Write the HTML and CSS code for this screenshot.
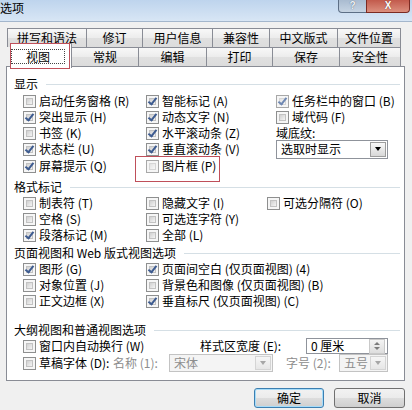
FILE: index.html
```html
<!DOCTYPE html>
<html lang="zh-CN">
<head>
  <meta charset="UTF-8">
  <title>选项</title>
  <link rel="stylesheet" href="styles.css">
</head>
<body>

<div class="titlebar">
  <span class="title">选项</span>
  <div class="caption-btns">
    <span class="cap-btn help"><span>?</span></span>
    <span class="cap-btn close"><span>X</span></span>
  </div>
</div>

<div class="tabs">
  <div class="tab-row back">
    <div class="tab">拼写和语法</div>
    <div class="tab">修订</div>
    <div class="tab">用户信息</div>
    <div class="tab">兼容性</div>
    <div class="tab">中文版式</div>
    <div class="tab">文件位置</div>
  </div>
  <div class="tab-row front">
    <div class="tab active"><span class="focus">视图</span></div>
    <div class="tab">常规</div>
    <div class="tab">编辑</div>
    <div class="tab">打印</div>
    <div class="tab">保存</div>
    <div class="tab">安全性</div>
  </div>
</div>

<div class="panel">
  <div class="sec-head">显示</div>
  <div class="opts show">
    <label class="cb-item"><span class="cb"></span>启动任务窗格 (R)</label>
    <label class="cb-item"><span class="cb on"></span>突出显示 (H)</label>
    <label class="cb-item"><span class="cb"></span>书签 (K)</label>
    <label class="cb-item"><span class="cb on"></span>状态栏 (U)</label>
    <label class="cb-item"><span class="cb on"></span>屏幕提示 (Q)</label>
    <label class="cb-item"><span class="cb on"></span>智能标记 (A)</label>
    <label class="cb-item"><span class="cb on"></span>动态文字 (N)</label>
    <label class="cb-item"><span class="cb on"></span>水平滚动条 (Z)</label>
    <label class="cb-item"><span class="cb on"></span>垂直滚动条 (V)</label>
    <label class="cb-item"><span class="cb dim"></span>图片框 (P)</label>
    <label class="cb-item"><span class="cb on dim"></span>任务栏中的窗口 (B)</label>
    <label class="cb-item"><span class="cb"></span>域代码 (F)</label>
    <span class="field-label">域底纹<u>:</u></span>
    <div class="combo"><span class="combo-text">选取时显示</span><span class="drop"><i class="arrow"></i></span></div>
  </div>

  <div class="sec-head fmt">格式标记</div>
  <div class="opts marks">
    <label class="cb-item"><span class="cb"></span>制表符 (T)</label>
    <label class="cb-item"><span class="cb"></span>空格 (S)</label>
    <label class="cb-item"><span class="cb on"></span>段落标记 (M)</label>
    <label class="cb-item"><span class="cb"></span>隐藏文字 (I)</label>
    <label class="cb-item"><span class="cb"></span>可选连字符 (Y)</label>
    <label class="cb-item"><span class="cb"></span>全部 (L)</label>
    <label class="cb-item"><span class="cb"></span>可选分隔符 (O)</label>
  </div>

  <div class="sec-head web">页面视图和 Web 版式视图选项</div>
  <div class="opts page">
    <label class="cb-item"><span class="cb on"></span>图形 (G)</label>
    <label class="cb-item"><span class="cb"></span>对象位置 (J)</label>
    <label class="cb-item"><span class="cb"></span>正文边框 (X)</label>
    <label class="cb-item"><span class="cb on"></span>页面间空白 (仅页面视图) (4)</label>
    <label class="cb-item"><span class="cb"></span>背景色和图像 (仅页面视图) (B)</label>
    <label class="cb-item"><span class="cb on"></span>垂直标尺 (仅页面视图) (C)</label>
  </div>

  <div class="sec-head outline">大纲视图和普通视图选项</div>
  <div class="outline-row first">
    <label class="cb-item wrap"><span class="cb"></span>窗口内自动换行 (W)</label>
    <span class="field-label width-label">样式区宽度 (E):</span>
    <div class="spin"><span class="combo-text">0 厘米</span><span class="spin-btns"><i class="up"></i><i class="down"></i></span></div>
  </div>
  <div class="outline-row second">
    <label class="cb-item draft"><span class="cb"></span>草稿字体 (D):</label>
    <span class="field-label muted name-label">名称 (1):</span>
    <div class="combo disabled font-name"><span class="combo-text">宋体</span><span class="drop"><i class="arrow"></i></span></div>
    <span class="field-label muted size-label">字号 (2):</span>
    <div class="combo disabled font-size"><span class="combo-text">五号</span><span class="drop"><i class="arrow"></i></span></div>
  </div>
</div>

<div class="buttons">
  <button class="btn default">确定</button>
  <button class="btn">取消</button>
</div>

<!-- red annotation boxes drawn over the dialog -->
<div class="mark mark-tab"></div>
<div class="mark mark-pic"></div>

</body>
</html>
```

FILE: styles.css
```css
body {
  margin: 0;
  width: 412px;
  height: 410px;
  overflow: hidden;
  position: relative;
  background: #f0f0f0;
  font-family: "Noto Sans CJK SC", "Liberation Sans", sans-serif;
  font-size: 12px;
  line-height: 16px;
  color: #000;
}

/* title bar */
.titlebar {
  height: 21px;
  border-bottom: 1px solid #a3b6cc;
  background: linear-gradient(#bed4ed, #d8e6f5);
  display: flex;
  justify-content: space-between;
  align-items: flex-start;
}
.title {
  line-height: 16px;
  padding-top: 0;
}
.caption-btns {
  display: flex;
  margin-right: 2px;
}
.cap-btn {
  box-sizing: border-box;
  height: 13px;
  border: 1px solid #5d6f86;
  border-top: none;
  display: flex;
  justify-content: center;
  align-items: flex-end;
  color: #fff;
  font-family: "Liberation Sans", sans-serif;
  font-weight: bold;
}
.cap-btn span {
  font-size: 10px;
  line-height: 10px;
  margin-bottom: 1px;
}
.help {
  width: 29px;
  border-radius: 0 0 0 4px;
  background: linear-gradient(#a9bbd0, #c6d4e3);
  color: #eef3f8;
  text-shadow: 0 0 1px #3b4b60;
}
.close {
  width: 44px;
  margin-left: -1px;
  border-color: #7b2a22;
  border-radius: 0 0 4px 0;
  background: linear-gradient(#c25a4c, #dc8f7e);
  text-shadow: 0 0 1px #5a1a12;
}

/* tabs */
.tabs {
  padding-top: 6px;
}
.tab-row {
  display: flex;
  height: 19px;
}
.tab-row.back {
  margin-left: 7px;
}
.tab-row.front {
  margin-left: 10px;
}
.tab {
  box-sizing: border-box;
  height: 19px;
  margin-right: -1px;
  border: 1px solid #898c95;
  border-bottom: none;
  background: linear-gradient(#f8f8f8 0%, #ececec 50%, #e0e0e0 51%, #dcdcdc 100%);
  text-align: center;
  line-height: 17px;
  white-space: nowrap;
}
.back .tab:nth-child(1) { width: 80px; }
.back .tab:nth-child(2) { width: 57px; }
.back .tab:nth-child(3) { width: 71px; }
.back .tab:nth-child(4) { width: 58px; }
.back .tab:nth-child(5) { width: 69px; }
.back .tab:nth-child(6) { width: 64px; }
.front .tab:nth-child(1) { width: 62px; }
.front .tab:nth-child(2) { width: 68px; }
.front .tab:nth-child(3) { width: 69px; }
.front .tab:nth-child(4) { width: 67px; }
.front .tab:nth-child(5) { width: 68px; }
.front .tab:nth-child(6) { width: 62px; }
.tab.active {
  position: relative;
  z-index: 2;
  height: 25px;
  margin-top: -4px;
  padding-top: 4px;
  background: #fff;
}
.focus {
  display: inline-block;
  box-sizing: border-box;
  width: 54px;
  height: 15px;
  margin-left: -6px;
  border: 1px dotted #444;
  line-height: 13px;
}

/* page */
.panel {
  box-sizing: border-box;
  width: 399px;
  height: 315px;
  margin-left: 6px;
  padding-top: 9px;
  border: 1px solid #898c95;
  background: #fff;
  position: relative;
  z-index: 1;
}
.sec-head {
  display: flex;
  align-items: center;
  height: 16px;
  padding: 0 4px 0 7px;
  white-space: nowrap;
}
.sec-head::after {
  content: "";
  flex: 1;
  height: 1px;
  margin-left: 8px;
  background: #d5dfe5;
}
.sec-head.fmt {
  margin-top: 4px;
}
.sec-head.web {
  margin-top: 2px;
}
.sec-head.outline {
  margin-top: 13px;
}

.opts {
  display: grid;
  grid-auto-flow: column;
  grid-auto-rows: 16px;
  padding-left: 16px;
}
.opts.show {
  margin-top: 1px;
  grid-template-columns: 123px 130px 1fr;
  grid-template-rows: 16px 16px 16px 16px 18px;
}
.opts.marks {
  grid-template-columns: 123px 121px 1fr;
  grid-template-rows: repeat(3, 16px);
}
.opts.page {
  grid-template-columns: 123px 1fr;
  grid-template-rows: repeat(3, 16px);
}

.cb-item {
  display: flex;
  align-items: center;
  white-space: nowrap;
  line-height: 14px;
}
.cb {
  flex: none;
  position: relative;
  box-sizing: border-box;
  width: 13px;
  height: 13px;
  margin-right: 3px;
  padding: 2px;
  border: 1px solid #8e8f8f;
  background: #f6f6f6;
}
.cb::before {
  content: "";
  display: block;
  box-sizing: border-box;
  width: 7px;
  height: 7px;
  border: 1px solid #c2c2c2;
  background: linear-gradient(135deg, #d0d0d0, #f4f4f4);
}
.cb.dim {
  border-color: #a8a8a8;
}
.cb.dim::before {
  border-color: #d6d6d6;
  background: linear-gradient(135deg, #e2e2e2, #f8f8f8);
}
.cb.on::after {
  content: "";
  position: absolute;
  left: 3px;
  top: 0;
  width: 3px;
  height: 7px;
  border-right: 2px solid #3d5b90;
  border-bottom: 2px solid #3d5b90;
  transform: rotate(38deg);
}
.cb.on.dim::after {
  border-color: #6f88b3;
}

.field-label {
  display: flex;
  align-items: center;
  white-space: nowrap;
  line-height: 14px;
}
.field-label u {
  text-underline-offset: 2px;
}
.muted {
  color: #8d8d8d;
}

/* drop-down boxes */
.combo,
.spin {
  box-sizing: border-box;
  display: flex;
  align-items: center;
  border: 1px solid #8f939b;
  background: #fff;
  padding: 1px;
}
.show .combo {
  align-self: center;
  width: 112px;
  height: 19px;
}
.combo-text {
  flex: 1;
  padding-left: 3px;
  white-space: nowrap;
  line-height: 14px;
}
.drop {
  flex: none;
  box-sizing: border-box;
  width: 16px;
  height: 100%;
  display: flex;
  align-items: center;
  justify-content: center;
  border: 1px solid #9d9d9d;
  background: linear-gradient(#f8f8f8, #d8d8d8);
}
.arrow {
  width: 0;
  height: 0;
  border-left: 3.5px solid transparent;
  border-right: 3.5px solid transparent;
  border-top: 4px solid #000;
}

.outline-row {
  display: flex;
  align-items: center;
  padding-left: 16px;
}
.outline-row.first {
  height: 16px;
}
.outline-row.second {
  height: 18px;
}
.cb-item.wrap {
  width: 177px;
}
.width-label {
  width: 106px;
}
.spin {
  width: 82px;
  height: 16px;
  padding: 0 1px 0 1px;
}
.spin-btns {
  flex: none;
  display: flex;
  flex-direction: column;
  justify-content: center;
  align-items: center;
  gap: 2px;
  width: 14px;
  height: 13px;
  border: 1px solid #c9c9c9;
  background: linear-gradient(#f4f4f4, #dedede);
  margin-right: 1px;
}
.spin-btns i {
  width: 0;
  height: 0;
  border-left: 3px solid transparent;
  border-right: 3px solid transparent;
}
.spin-btns .up {
  border-bottom: 3px solid #7c7c7c;
}
.spin-btns .down {
  border-top: 3px solid #7c7c7c;
}

.cb-item.draft {
  width: 90px;
}
.name-label {
  width: 56px;
}
.size-label {
  width: 53px;
  padding-left: 13px;
}
.combo.disabled {
  height: 18px;
  border-color: #c3c3c3;
  background: #f4f4f4;
  color: #8d8d8d;
}
.combo.disabled .drop {
  border-color: #d4d4d4;
  background: linear-gradient(#f6f6f6, #e6e6e6);
}
.combo.disabled .arrow {
  border-top-color: #a6a6a6;
}
.font-name {
  width: 104px;
}
.font-size {
  width: 49px;
}

/* dialog buttons */
.buttons {
  display: flex;
  justify-content: flex-end;
  gap: 10px;
  margin-top: 7px;
  padding-right: 7px;
}
.btn {
  box-sizing: border-box;
  width: 71px;
  height: 20px;
  padding: 0;
  border: 1px solid #707070;
  border-radius: 3px;
  background: linear-gradient(#f2f2f2 0%, #ebebeb 50%, #dddddd 51%, #cfcfcf 100%);
  font-family: inherit;
  font-size: 12px;
  line-height: 16px;
  color: #000;
}
.btn.default {
  width: 70px;
  border-color: #3c7fb1;
  box-shadow: inset 0 0 0 1px #a6dcf9;
}

/* red annotation boxes */
.mark {
  position: absolute;
  box-sizing: border-box;
  border: 1px solid #bf4f5a;
  pointer-events: none;
  z-index: 5;
}
.mark-tab {
  left: 10px;
  top: 43px;
  width: 60px;
  height: 26px;
}
.mark-pic {
  left: 135px;
  top: 156px;
  width: 85px;
  height: 26px;
}
```
